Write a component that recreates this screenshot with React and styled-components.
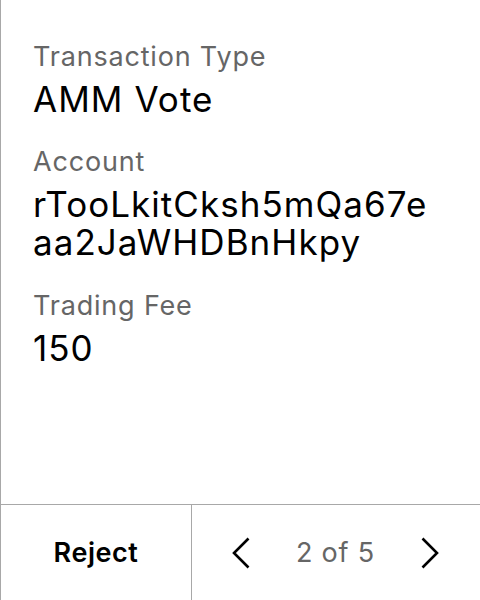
import React from 'react';
import styled, { createGlobalStyle } from 'styled-components';

const GlobalStyle = createGlobalStyle`
  html, body {
    margin: 0;
    padding: 0;
    background: #ffffff;
  }
  body {
    font-family: Inter, "Noto Sans", sans-serif;
  }
`;

const Screen = styled.div`
  width: 480px;
  height: 600px;
  box-sizing: border-box;
  border-left: 1px solid #a8a8a8;
  background: #ffffff;
  display: flex;
  flex-direction: column;
`;

const Content = styled.div`
  flex: 1;
  padding: 39px 40px 0 32px;
  display: flex;
  flex-direction: column;
`;

const Field = styled.div`
  display: flex;
  flex-direction: column;
  margin-bottom: ${p => p.$gap}px;
`;

const Label = styled.div`
  font-size: 27px;
  line-height: 36px;
  color: #666666;
  letter-spacing: 0.03em;
`;

const Value = styled.div`
  font-size: 35px;
  line-height: 38px;
  color: #000000;
  margin-top: 5px;
  letter-spacing: 0.03em;
  word-break: break-all;
`;

const Footer = styled.div`
  height: 96px;
  box-sizing: border-box;
  border-top: 1px solid #a8a8a8;
  display: flex;
`;

const RejectButton = styled.button`
  width: 191px;
  border: none;
  border-right: 1px solid #a8a8a8;
  background: none;
  font-family: Inter, "Noto Sans", sans-serif;
  font-size: 27px;
  font-weight: 600;
  letter-spacing: 0.02em;
  color: #000000;
  padding: 0;
  cursor: pointer;
`;

const Nav = styled.div`
  flex: 1;
  display: flex;
  align-items: center;
  justify-content: space-between;
  padding: 0 41px 0 40px;
`;

const Arrow = styled.button`
  border: none;
  background: none;
  padding: 0;
  display: flex;
  cursor: pointer;
`;

const PageCount = styled.span`
  font-size: 27px;
  letter-spacing: 0.03em;
  color: #666666;
`;

const Chevron = ({ dir }) => (
  <svg width="18" height="32" viewBox="0 0 18 32" fill="none">
    <path
      d={dir === 'left' ? 'M16.5 1.5 L2 16 L16.5 30.5' : 'M1.5 1.5 L16 16 L1.5 30.5'}
      stroke="#000"
      strokeWidth="2.6"
    />
  </svg>
);

const fields = [
  { label: 'Transaction Type', value: 'AMM Vote', gap: 26 },
  { label: 'Account', value: 'rTooLkitCksh5mQa67eaa2JaWHDBnHkpy', gap: 27 },
  { label: 'Trading Fee', value: '150', gap: 0 },
];

const App = () => (
  <>
    <GlobalStyle />
    <Screen>
      <Content>
        {fields.map(f => (
          <Field key={f.label} $gap={f.gap}>
            <Label>{f.label}</Label>
            <Value>{f.value}</Value>
          </Field>
        ))}
      </Content>
      <Footer>
        <RejectButton>Reject</RejectButton>
        <Nav>
          <Arrow><Chevron dir="left" /></Arrow>
          <PageCount>2 of 5</PageCount>
          <Arrow><Chevron dir="right" /></Arrow>
        </Nav>
      </Footer>
    </Screen>
  </>
);

export default App;
